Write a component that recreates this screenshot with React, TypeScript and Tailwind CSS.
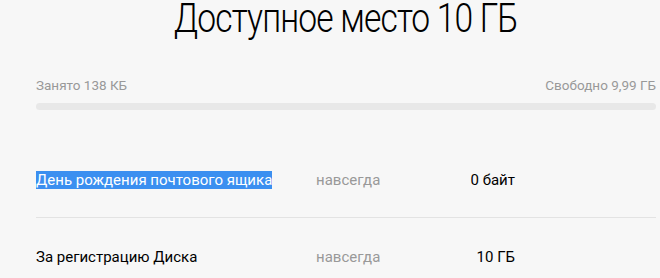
import React from "react";

const rows = [
  { title: "День рождения почтового ящика", term: "навсегда", size: "0 байт", selected: true },
  { title: "За регистрацию Диска", term: "навсегда", size: "10 ГБ", selected: false },
];

const App = () => {
  return (
    <div className="w-[660px] h-[278px] overflow-hidden bg-[#f7f7f7] font-['Roboto',sans-serif]">
      <div className="pl-[36px] pr-[4px]">
        {/* title font in the shot is a condensed light face, so squeeze Roboto Light a bit */}
        <h1 className="-mt-[1px] text-center text-[40px] leading-[40px] font-light text-black">
          <span className="inline-block scale-x-[0.84] tracking-[-1px] whitespace-nowrap">
            Доступное место 10 ГБ
          </span>
        </h1>

        <div className="mt-[38px] flex justify-between text-[13.5px] leading-[16px] text-[#999]">
          <span>Занято 138 КБ</span>
          <span>Свободно 9,99 ГБ</span>
        </div>
        <div className="mt-[10px] h-[7px] rounded-full bg-[#e8e8e8]" />

        <div>
          {rows.map((row, i) => (
            <div
              key={row.title}
              className={
                i === 0
                  ? "flex items-center mt-[60px] pb-[27px] border-b border-[#e3e3e3] text-[15px] leading-[20px]"
                  : "flex items-center pt-[29px] text-[15px] leading-[20px]"
              }
            >
              <div className="w-[280px]">
                {row.selected ? (
                  <span className="bg-[#3b8ff0] text-white">{row.title}</span>
                ) : (
                  <span className="text-black">{row.title}</span>
                )}
              </div>
              <div className="w-[120px] text-[#999]">{row.term}</div>
              <div className="w-[79px] text-right text-black">{row.size}</div>
            </div>
          ))}
        </div>
      </div>
    </div>
  );
};

export default App;
